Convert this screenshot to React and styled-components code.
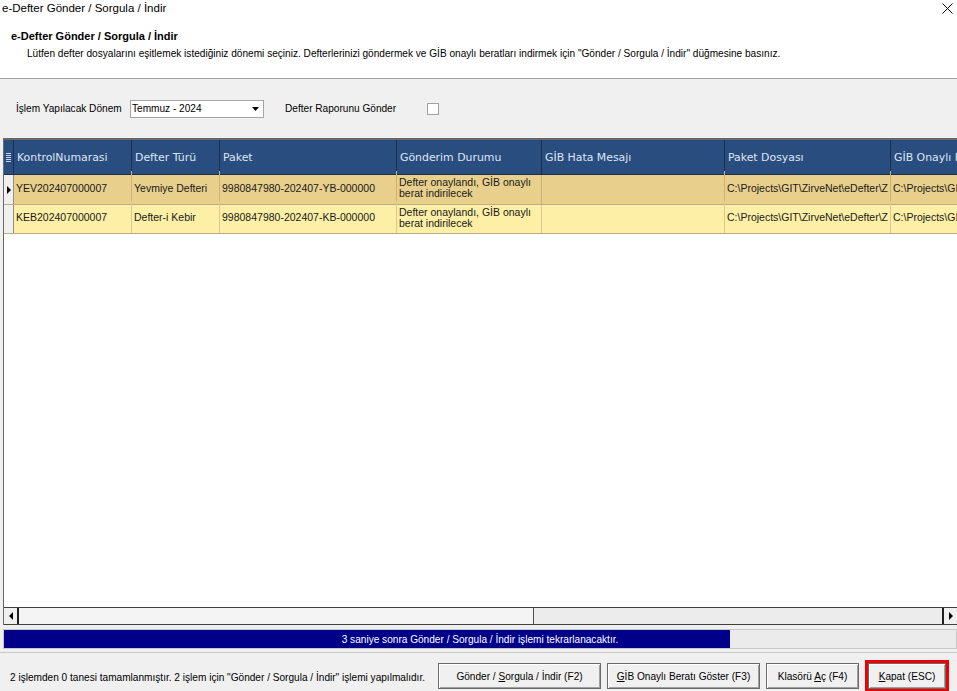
import React from 'react';
import styled, { createGlobalStyle } from 'styled-components';

const GlobalStyle = createGlobalStyle`
  html, body {
    margin: 0;
    padding: 0;
    background: #f0f0f0;
  }
  body {
    font-family: 'Liberation Sans', Arial, sans-serif;
    font-size: 11px;
    color: #000;
  }
`;

const columns = [
  { key: 'kontrol', title: 'KontrolNumarasi', width: 118 },
  { key: 'tur', title: 'Defter Türü', width: 88 },
  { key: 'paket', title: 'Paket', width: 177 },
  { key: 'durum', title: 'Gönderim Durumu', width: 145 },
  { key: 'hata', title: 'GİB Hata Mesajı', width: 183 },
  { key: 'dosya', title: 'Paket Dosyası', width: 166 },
  { key: 'onayli', title: 'GİB Onaylı Paket Dosyası', width: 170 },
];

const rows = [
  {
    kontrol: 'YEV202407000007',
    tur: 'Yevmiye Defteri',
    paket: '9980847980-202407-YB-000000',
    durum: 'Defter onaylandı, GİB onaylı berat indirilecek',
    hata: '',
    dosya: 'C:\\Projects\\GIT\\ZirveNet\\eDefter\\Z',
    onayli: 'C:\\Projects\\GIT\\ZirveNet\\eDefter\\Z',
    current: true,
  },
  {
    kontrol: 'KEB202407000007',
    tur: 'Defter-i Kebir',
    paket: '9980847980-202407-KB-000000',
    durum: 'Defter onaylandı, GİB onaylı berat indirilecek',
    hata: '',
    dosya: 'C:\\Projects\\GIT\\ZirveNet\\eDefter\\Z',
    onayli: 'C:\\Projects\\GIT\\ZirveNet\\eDefter\\Z',
  },
];

const gridTemplate = `10px ${columns.map((c) => c.width + 'px').join(' ')}`;

const App = () => {
  return (
    <>
      <GlobalStyle />
      <Window>
        <Header>
          <TitleBar>
            <TitleText>e-Defter Gönder / Sorgula / İndir</TitleText>
            <CloseButton>
              <svg width="11" height="11" viewBox="0 0 11 11">
                <path d="M0.5 0.5 L10.5 10.5 M10.5 0.5 L0.5 10.5" stroke="#000" strokeWidth="1" />
              </svg>
            </CloseButton>
          </TitleBar>
          <HeaderTitle>e-Defter Gönder / Sorgula / İndir</HeaderTitle>
          <HeaderDesc>
            Lütfen defter dosyalarını eşitlemek istediğiniz dönemi seçiniz. Defterlerinizi göndermek ve GİB onaylı beratları indirmek için "Gönder / Sorgula / İndir" düğmesine basınız.
          </HeaderDesc>
        </Header>

        <FilterBar>
          <FilterLabel $w={114}>İşlem Yapılacak Dönem</FilterLabel>
          <Select>
            <span>Temmuz - 2024</span>
            <svg width="7" height="4" viewBox="0 0 7 4">
              <path d="M0 0 H7 L3.5 4 Z" fill="#000" />
            </svg>
          </Select>
          <FilterLabel $w={142}>Defter Raporunu Gönder</FilterLabel>
          <Checkbox />
        </FilterBar>

        <GridFrame>
          <GridScroll>
            <GridTable>
              <HeadRow>
                <HeadIndicator>
                  <svg width="5" height="9" viewBox="0 0 5 9">
                    <path d="M0 0.5 H5 M0 2.5 H5 M0 4.5 H5 M0 6.5 H5 M0 8.5 H5" stroke="#c9d6e8" strokeWidth="1" />
                  </svg>
                </HeadIndicator>
                {columns.map((c) => (
                  <HeadCell key={c.key}>{c.title}</HeadCell>
                ))}
              </HeadRow>
              {rows.map((r) => (
                <DataRow key={r.kontrol} $current={r.current}>
                  <RowIndicator>
                    {r.current && (
                      <svg width="4" height="8" viewBox="0 0 4 8">
                        <path d="M0 0 L4 4 L0 8 Z" fill="#000" />
                      </svg>
                    )}
                  </RowIndicator>
                  {columns.map((c) => (
                    <Cell key={c.key} $wrap={c.key === 'durum'} $current={r.current}>
                      {r[c.key]}
                    </Cell>
                  ))}
                </DataRow>
              ))}
            </GridTable>
          </GridScroll>
          <HScroll>
            <ScrollArrow>
              <svg width="4" height="8" viewBox="0 0 4 8">
                <path d="M4 0 L0 4 L4 8 Z" fill="#000" />
              </svg>
            </ScrollArrow>
            <ScrollThumb />
            <ScrollTrack />
            <ScrollArrow $right>
              <svg width="4" height="8" viewBox="0 0 4 8">
                <path d="M0 0 L4 4 L0 8 Z" fill="#000" />
              </svg>
            </ScrollArrow>
          </HScroll>
        </GridFrame>

        <Progress>
          <ProgressFill style={{ width: `${(728 / 954) * 100}%` }} />
          <ProgressText>3 saniye sonra Gönder / Sorgula / İndir işlemi tekrarlanacaktır.</ProgressText>
        </Progress>

        <Footer>
          <StatusText>
            2 işlemden 0 tanesi tamamlanmıştır. 2 işlem için "Gönder / Sorgula / İndir" işlemi yapılmalıdır.
          </StatusText>
          <Buttons>
            <Button $w={163}>
              <span>Gönder / <u>S</u>orgula / İndir (F2)</span>
            </Button>
            <Button $w={153}>
              <span><u>G</u>İB Onaylı Beratı Göster (F3)</span>
            </Button>
            <Button $w={93}>
              <span>Klasörü <u>A</u>ç (F4)</span>
            </Button>
            <FocusRing>
              <Button $w={78}>
                <span><u>K</u>apat (ESC)</span>
              </Button>
            </FocusRing>
          </Buttons>
        </Footer>
      </Window>
    </>
  );
};

export default App;

const Window = styled.div`
  width: 957px;
  height: 691px;
  display: flex;
  flex-direction: column;
  background: #f0f0f0;
  overflow: hidden;
`;

const Header = styled.div`
  background: #fff;
  height: 78px;
  border-bottom: 1px solid #a0a0a0;
  display: flex;
  flex-direction: column;
  flex-shrink: 0;
`;

const TitleBar = styled.div`
  height: 15px;
  display: flex;
  align-items: center;
  justify-content: space-between;
  padding: 0 3px 0 2px;
`;

const TitleText = styled.span`
  font-size: 11.5px;
`;

const CloseButton = styled.span`
  display: flex;
  margin-right: 1px;
  margin-top: 2px;
`;

const HeaderTitle = styled.div`
  font-weight: bold;
  font-size: 11px;
  padding-left: 11px;
  margin-top: 15px;
`;

const HeaderDesc = styled.div`
  font-size: 10.1px;
  padding-left: 27px;
  margin-top: 6px;
  white-space: nowrap;
`;

const FilterBar = styled.div`
  height: 59px;
  display: flex;
  align-items: center;
  padding-left: 16px;
  flex-shrink: 0;
`;

const FilterLabel = styled.span`
  width: ${(p) => p.$w}px;
  font-size: 10.1px;
  white-space: nowrap;
`;

const Select = styled.div`
  width: 134px;
  height: 18px;
  box-sizing: border-box;
  border: 1px solid #a6a6a6;
  background: #fff;
  display: flex;
  align-items: center;
  justify-content: space-between;
  padding: 0 4px 0 1px;
  margin-right: 21px;
  font-size: 10.1px;
`;

const Checkbox = styled.span`
  width: 10px;
  height: 10px;
  border: 1px solid #a0a0a0;
  background: #fff;
`;

const GridFrame = styled.div`
  flex: 1;
  display: flex;
  flex-direction: column;
  margin-left: 3px;
  border-top: 2px solid #696969;
  border-left: 1px solid #696969;
  background: #fff;
  min-height: 0;
`;

const GridScroll = styled.div`
  flex: 1;
  overflow: hidden;
  background: #fff;
`;

const GridTable = styled.div`
  display: flex;
  flex-direction: column;
  width: max-content;
`;

const HeadRow = styled.div`
  display: grid;
  grid-template-columns: ${gridTemplate};
  height: 34px;
  background: #2a4d80;
  border-bottom: 1px solid #1b2f4d;
`;

const HeadIndicator = styled.div`
  display: flex;
  align-items: center;
  justify-content: center;
  border-right: 1px solid #1b2f4d;
`;

const HeadCell = styled.div`
  display: flex;
  align-items: center;
  padding-left: 3px;
  color: #dfe6f0;
  font-family: 'DejaVu Sans', Verdana, sans-serif;
  font-size: 10.9px;
  border-right: 1px solid #1b2f4d;
  white-space: nowrap;
  overflow: hidden;
`;

const DataRow = styled.div`
  display: grid;
  grid-template-columns: ${gridTemplate};
  height: ${(p) => (p.$current ? 29 : 28)}px;
  background: ${(p) => (p.$current ? '#e8d08c' : '#fdefa6')};
  border-bottom: 1px solid #b9ad86;
`;

const RowIndicator = styled.div`
  background: #f0f0f0;
  display: flex;
  align-items: center;
  justify-content: center;
  border-right: 1px solid #8f8f8f;
`;

const Cell = styled.div`
  display: flex;
  align-items: ${(p) => (p.$wrap ? 'flex-start' : 'center')};
  padding: ${(p) => (p.$wrap ? '2px 2px 0 2px' : '0 2px')};
  font-size: 10.5px;
  line-height: ${(p) => (p.$wrap ? '11px' : 'normal')};
  color: #1a1a1a;
  border-right: 1px solid ${(p) => (p.$current ? '#c7b27a' : '#d9c98f')};
  white-space: ${(p) => (p.$wrap ? 'normal' : 'nowrap')};
  overflow: hidden;
  margin-top: ${(p) => (p.$wrap ? 0 : -4)}px;
`;

const HScroll = styled.div`
  height: 16px;
  display: flex;
  border-top: 1px solid #404040;
  border-bottom: 1px solid #404040;
  background: #f0f0f0;
  flex-shrink: 0;
`;

const ScrollArrow = styled.div`
  width: 13px;
  display: flex;
  align-items: center;
  justify-content: center;
  border-right: ${(p) => (p.$right ? 'none' : '2px solid #202020')};
  border-left: ${(p) => (p.$right ? '2px solid #202020' : 'none')};
  background: #f0f0f0;
`;

const ScrollThumb = styled.div`
  width: 514px;
  border-right: 1px solid #505050;
  background: #f4f4f4;
`;

const ScrollTrack = styled.div`
  flex: 1;
  background: #ececec;
`;

const Progress = styled.div`
  position: relative;
  height: 18px;
  margin: 4px 0 3px 3px;
  background: #ebebeb;
  border: 1px solid #c8c8c8;
  flex-shrink: 0;
`;

const ProgressFill = styled.div`
  height: 100%;
  background: #000088;
`;

const ProgressText = styled.div`
  position: absolute;
  inset: 0;
  display: flex;
  align-items: center;
  justify-content: center;
  color: #fff;
  font-size: 10.1px;
`;

const Footer = styled.div`
  flex-shrink: 0;
  height: 38px;
  border-top: 1px solid #c8c8c8;
  display: flex;
  align-items: center;
  justify-content: space-between;
  padding-left: 10px;
`;

const StatusText = styled.span`
  font-size: 10.1px;
  white-space: nowrap;
  margin-top: 10px;
`;

const Buttons = styled.div`
  display: flex;
  align-items: center;
  gap: 6px;
  margin-top: 8px;
  padding-right: 8px;
`;

const Button = styled.div`
  width: ${(p) => p.$w}px;
  height: 26px;
  box-sizing: border-box;
  display: flex;
  align-items: center;
  justify-content: center;
  background: #f0f0f0;
  border: 1px solid #6a6a6a;
  box-shadow: inset 1px 1px 0 #fff, inset -1px -1px 0 #a0a0a0;
  font-size: 10.1px;
  white-space: nowrap;
`;

const FocusRing = styled.div`
  border: 3px solid #ee0000;
`;
